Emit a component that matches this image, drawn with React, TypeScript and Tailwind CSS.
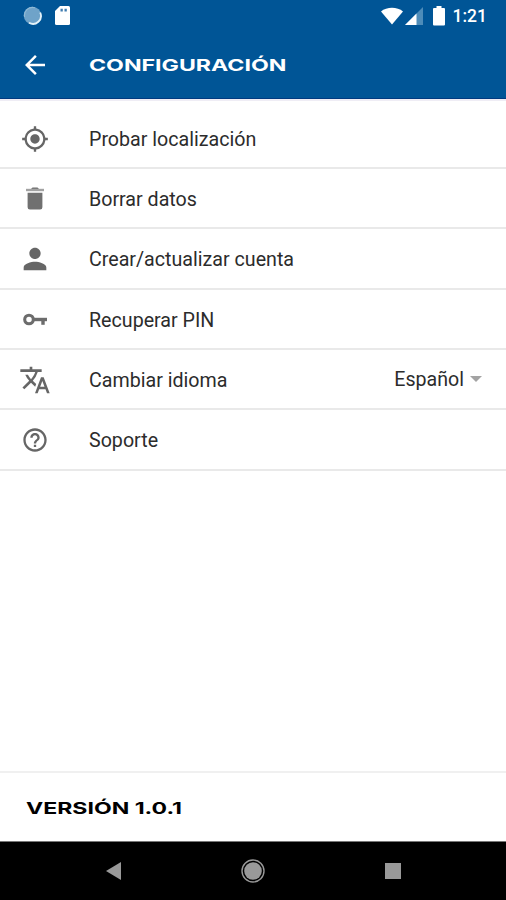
import type { ReactNode } from 'react';
import { MdArrowBack, MdHelpOutline, MdMyLocation, MdPerson, MdTranslate } from 'react-icons/md';

function TrashIcon() {
  return (
    <svg width="18" height="23" viewBox="0 0 18 23" fill="#707070">
      <path d="M5 2 L6.5 .5h5L13 2z" />
      <path d="M0 1.8h18v2.4H0z" fill="#a2a2a2" />
      <path d="M1.6 5.8h14.8v14.4a2.3 2.3 0 0 1-2.3 2.3H3.9a2.3 2.3 0 0 1-2.3-2.3z" />
    </svg>
  );
}

function KeyIcon() {
  return (
    <svg width="24" height="13" viewBox="0 0 24 13" fill="none" stroke="#6c6c6c">
      <circle cx="6" cy="6.5" r="4.3" strokeWidth="3.1" />
      <path d="M10.5 6.5H24" strokeWidth="3.4" />
      <path d="M20 6.5v5.300" strokeWidth="3.400" />
    </svg>
  );
}

function Row({ icon, label, height = 'h-[60px]', children }: { icon: ReactNode; label: string; height?: string; children?: ReactNode }) {
  return (
    <li className={`flex ${height} items-center border-b-2 border-[#e9e9e9]`}>
      <span className="flex w-[70px] shrink-0 justify-center pt-px text-[#666]">{icon}</span>
      <span className="ml-[19px] flex-1 whitespace-nowrap pt-[3px] text-[19.65px] text-[#2c2c2c]">{label}</span>
      {children}
    </li>
  );
}

function StatusBar() {
  return (
    <div className="flex h-[31px] items-center">
      <svg className="ml-[23px]" width="19" height="19" viewBox="0 0 19 19">
        <circle cx="9.5" cy="9.5" r="8.7" fill="#6fa3c9" />
        <path d="M17.2 6.5A8 8 0 0 1 6 16.8" fill="none" stroke="#e4f2f8" strokeWidth="1.8" />
        <path d="M1.6 11A8 8 0 0 1 12 1.8" fill="none" stroke="#8fb9d5" strokeWidth="1.2" />
      </svg>
      <svg className="ml-[13px]" width="15" height="19" viewBox="0 0 15 19">
        <path d="M5 0h8.5A1.5 1.5 0 0 1 15 1.5v16a1.5 1.5 0 0 1-1.5 1.5h-12A1.5 1.5 0 0 1 0 17.500V5z" fill="#fff" />
        <path d="M5.500 2.800h2.300v2.800H5.500zM9.500 2.800h2.300v2.800H9.500z" fill="#3f7cb0" />
      </svg>
      <svg className="ml-auto" width="22" height="18" viewBox="0 0 23 18" fill="#fff">
        <path d="M0 4.200C6 -1 17 -1 23 4.200L11.500 18z" />
      </svg>
      <svg className="ml-[2px]" width="18" height="18" viewBox="0 0 18 18">
        <path d="M18 0v18H0z" fill="#4d8cb9" />
        <path d="M11.500 6.500V18H0z" fill="#fff" />
      </svg>
      <svg className="ml-[10px]" width="12" height="20" viewBox="0 0 12 20" fill="#fff">
        <path d="M3.500 0h5v2H11a1 1 0 0 1 1 1v15.500a1 1 0 0 1-1 1H1a1 1 0 0 1-1-1V3a1 1 0 0 1 1-1h2.500z" />
      </svg>
      <span className="ml-[8px] mr-[19px] pt-[2px] text-[17.5px] font-medium text-white">1:21</span>
    </div>
  );
}

export default function App() {
  return (
    <div className="flex h-[900px] w-[506px] flex-col overflow-hidden bg-white font-[Roboto,sans-serif]">
      <header className="h-[99px] shrink-0 border-b border-[#003a80] bg-[#005596]">
        <StatusBar />
        <div className="flex h-[67px] items-center">
          <MdArrowBack className="ml-[20px] shrink-0 text-white" size={30} />
          <h1 className="ml-[39px] origin-left scale-x-[1.445] whitespace-nowrap font-[Inter,sans-serif] text-[16px] font-bold text-white">
            CONFIGURACIÓN
          </h1>
        </div>
      </header>
      <div className="h-[10px] shrink-0 border-t-2 border-[#efedf5]" />
      <ul className="flex-1">
        <Row icon={<MdMyLocation size={28} />} label="Probar localización" />
        <Row icon={<TrashIcon />} label="Borrar datos" />
        <Row icon={<MdPerson size={34} />} label="Crear/actualizar cuenta" height="h-[61px]" />
        <Row icon={<KeyIcon />} label="Recuperar PIN" />
        <Row icon={<MdTranslate size={32} />} label="Cambiar idioma">
          <span className="mr-[6px] pt-[2px] text-[19.6px] text-[#2c2c2c]">Español</span>
          <svg className="mr-[24px]" width="12" height="6" viewBox="0 0 12 6">
            <path d="M0 0h12L6 6z" fill="#a3a3a3" />
          </svg>
        </Row>
        <Row icon={<MdHelpOutline size={28} />} label="Soporte" height="h-[61px]" />
      </ul>
      <footer className="shrink-0">
        <div className="flex h-[70px] items-center border-t-2 border-[#f0f0f0] pl-[26px] pt-[2px]">
          <span className="origin-left scale-x-[1.44] whitespace-nowrap font-[Inter,sans-serif] text-[16px] font-bold text-black">
            VERSIÓN 1.0.1
          </span>
        </div>
        <nav className="flex h-[59px] items-center border-t border-[#777] bg-black">
          <svg className="ml-[106px]" width="15" height="18" viewBox="0 0 15 18">
            <path d="M15 0v18L0 9z" fill="#999" />
          </svg>
          <svg className="ml-[120px]" width="24" height="24" viewBox="0 0 24 24">
            <circle cx="12" cy="12" r="11" fill="none" stroke="#999" strokeWidth="1.400" />
            <circle cx="12" cy="12" r="8.800" fill="#999" />
          </svg>
          <span className="ml-[120px] h-4 w-4 bg-[#999]" />
        </nav>
      </footer>
    </div>
  );
}
